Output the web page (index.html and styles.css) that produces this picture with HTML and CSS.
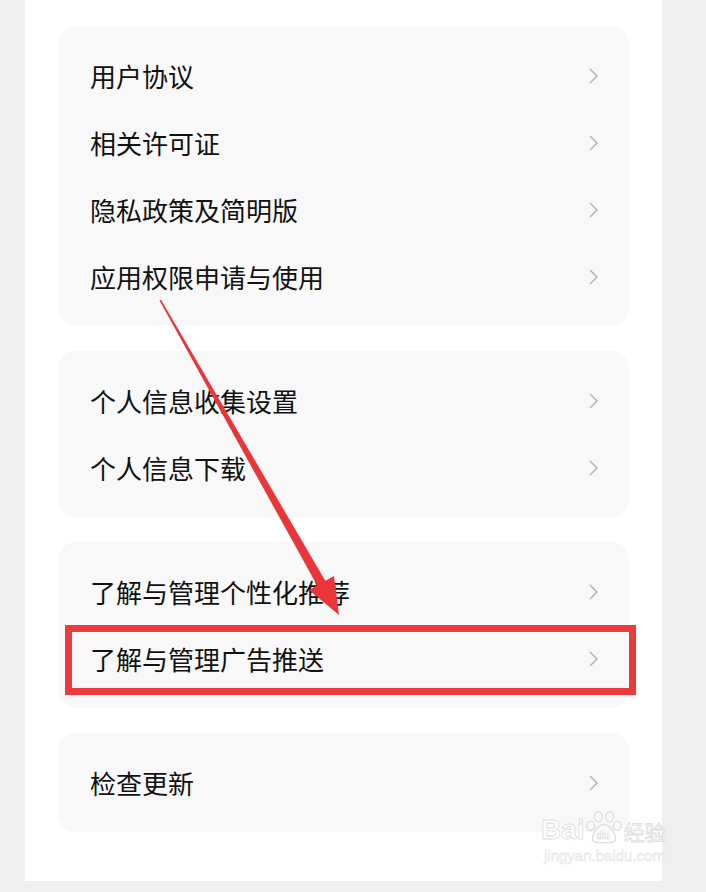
FILE: index.html
```html
<!DOCTYPE html>
<html lang="zh-CN">
<head>
    <meta charset="UTF-8">
    <meta name="viewport" content="width=device-width, initial-scale=1.0">
    <title>关于</title>
    <link rel="stylesheet" href="styles.css">
</head>
<body>
    <div class="screen">
        <main class="panel">
            <section class="card">
                <div class="row"><span>用户协议</span><svg class="chevron" viewBox="0 0 9 16"><path d="M1 1 L8 8 L1 15"/></svg></div>
                <div class="row"><span>相关许可证</span><svg class="chevron" viewBox="0 0 9 16"><path d="M1 1 L8 8 L1 15"/></svg></div>
                <div class="row"><span>隐私政策及简明版</span><svg class="chevron" viewBox="0 0 9 16"><path d="M1 1 L8 8 L1 15"/></svg></div>
                <div class="row"><span>应用权限申请与使用</span><svg class="chevron" viewBox="0 0 9 16"><path d="M1 1 L8 8 L1 15"/></svg></div>
            </section>
            <section class="card">
                <div class="row"><span>个人信息收集设置</span><svg class="chevron" viewBox="0 0 9 16"><path d="M1 1 L8 8 L1 15"/></svg></div>
                <div class="row"><span>个人信息下载</span><svg class="chevron" viewBox="0 0 9 16"><path d="M1 1 L8 8 L1 15"/></svg></div>
            </section>
            <section class="card">
                <div class="row"><span>了解与管理个性化推荐</span><svg class="chevron" viewBox="0 0 9 16"><path d="M1 1 L8 8 L1 15"/></svg></div>
                <div class="row"><span>了解与管理广告推送</span><svg class="chevron" viewBox="0 0 9 16"><path d="M1 1 L8 8 L1 15"/></svg></div>
            </section>
            <section class="card">
                <div class="row"><span>检查更新</span><svg class="chevron" viewBox="0 0 9 16"><path d="M1 1 L8 8 L1 15"/></svg></div>
            </section>
        </main>

        <!-- annotation: arrow + highlight box -->
        <svg class="annotation" width="706" height="892" viewBox="0 0 706 892">
            <polygon points="159.5,300.5 161,299.7 326,582 318,587" fill="#e8363b"/>
            <polygon points="339,615 309,590 334,576" fill="#e8363b"/>
            <rect x="68.5" y="628.5" width="564" height="63" fill="none" stroke="#ec3b3f" stroke-width="7"/>
        </svg>

        <div class="watermark">
            <div class="wm-logo">
                <span>Bai</span>
                <svg width="38" height="36" viewBox="0 0 34 30">
                    <g fill="none" stroke="#dcdcdc" stroke-width="1.2">
                        <ellipse cx="12" cy="5" rx="3.5" ry="4.5"/>
                        <ellipse cx="22" cy="5" rx="3.5" ry="4.5"/>
                        <ellipse cx="5" cy="13" rx="3.5" ry="4.2"/>
                        <ellipse cx="29" cy="13" rx="3.5" ry="4.2"/>
                        <path d="M17 12 C10 12 6 22 7 26 C8 29 13 28 17 28 C21 28 26 29 27 26 C28 22 24 12 17 12 Z"/>
                    </g>
                    <text x="10" y="25" font-size="10" fill="#fff" stroke="#dcdcdc" stroke-width="0.6" font-family="Liberation Sans, sans-serif">du</text>
                </svg>
                <span class="wm-cn">经验</span>
            </div>
            <div class="wm-url">jingyan.baidu.com</div>
        </div>
    </div>
</body>
</html>
```

FILE: styles.css
```css
* {
    box-sizing: border-box;
    margin: 0;
    padding: 0;
}

body {
    font-family: 'Noto Sans CJK SC', 'Noto Sans', sans-serif;
    background-color: #efefef;
    color: #111;
}

.screen {
    position: relative;
    width: 706px;
    height: 892px;
    overflow: hidden;
}

.panel {
    width: 637px;
    height: 881px;
    margin-left: 25px;
    background-color: #fff;
    padding: 26px 33px 0 33px;
    display: flex;
    flex-direction: column;
    gap: 25px;
}

.card {
    background-color: #f8f8f8;
    border-radius: 18px;
    padding: 16px 31px 16px 32px;
}

.row {
    height: 67px;
    display: flex;
    align-items: center;
    justify-content: space-between;
    font-size: 26px;
    line-height: 1;
}

.chevron {
    width: 9px;
    height: 16px;
    fill: none;
    stroke: #b4b4b4;
    stroke-width: 1.5;
}

.annotation {
    position: absolute;
    left: 0;
    top: 0;
    pointer-events: none;
}

.watermark {
    position: absolute;
    left: 541px;
    top: 810px;
    color: #fff;
    font-family: 'Liberation Sans', sans-serif;
}

.wm-logo {
    display: flex;
    align-items: flex-end;
    font-size: 28px;
    font-weight: bold;
    -webkit-text-stroke: 0.8px #dcdcdc;
}

.wm-cn {
    font-family: 'Noto Sans CJK SC', sans-serif;
    font-size: 21px;
    font-weight: normal;
    margin-left: 1px;
}

.wm-url {
    font-size: 15px;
    margin-top: 1px;
    margin-left: 3px;
    -webkit-text-stroke: 0.5px #dcdcdc;
}
```
